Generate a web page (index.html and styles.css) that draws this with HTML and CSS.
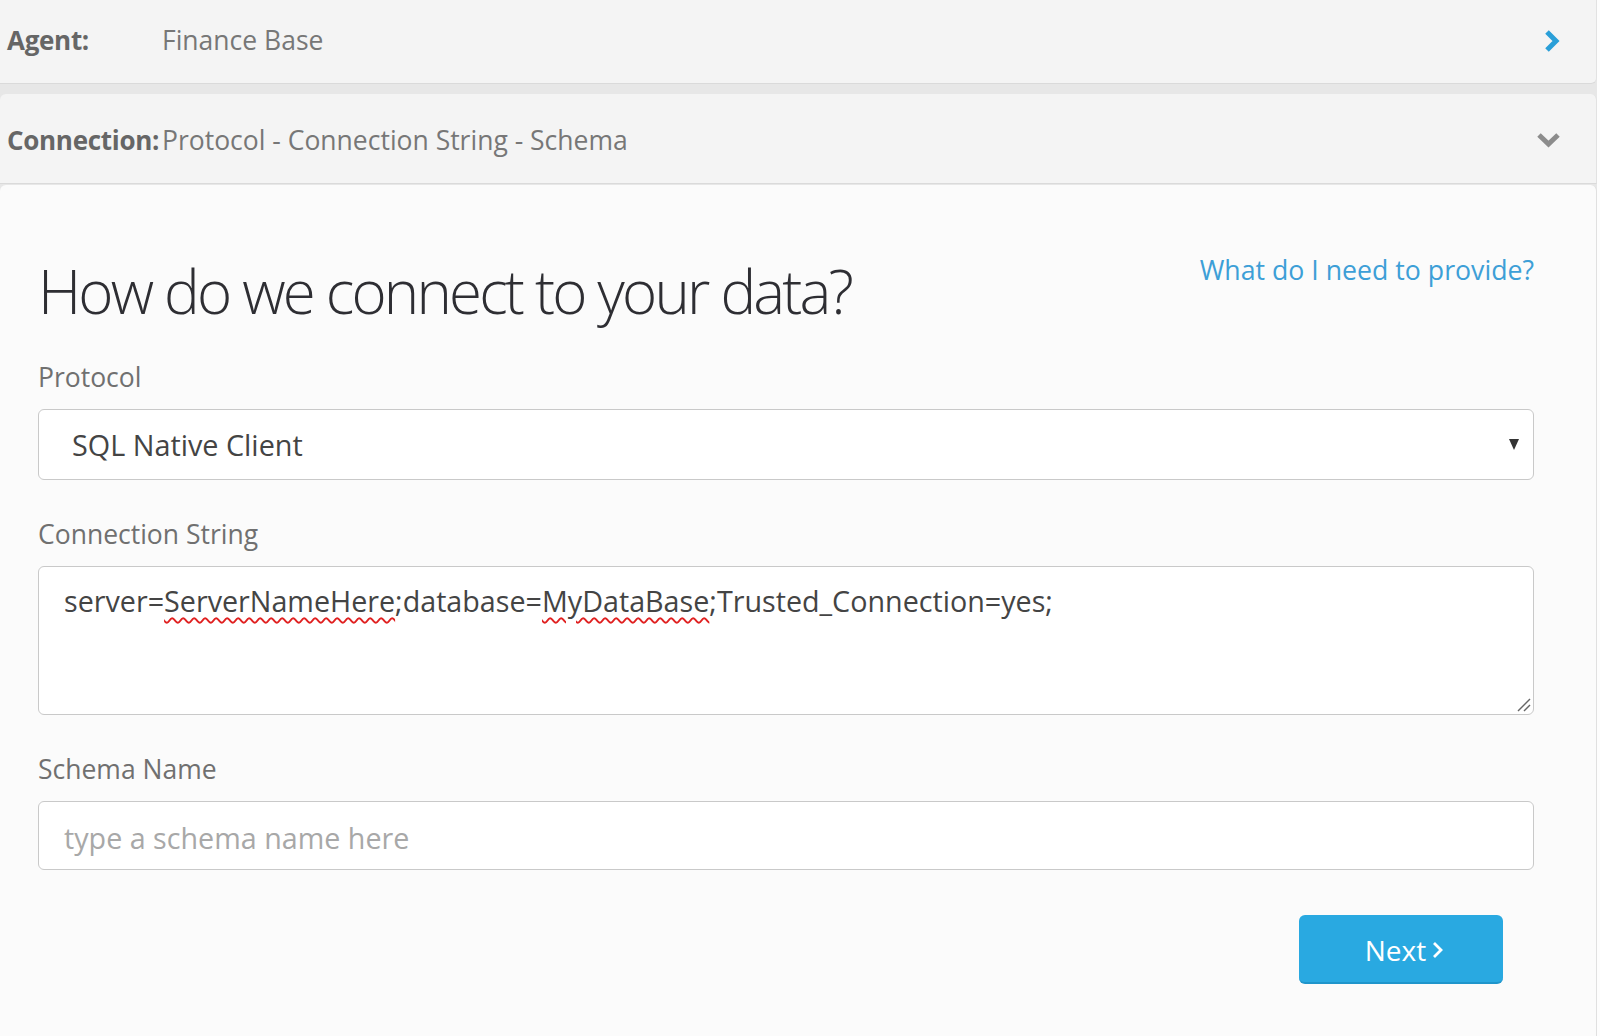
FILE: index.html
```html
<!DOCTYPE html>
<html lang="en">
<head>
  <meta charset="UTF-8" />
  <meta name="viewport" content="width=device-width,initial-scale=1.0">
  <title>Connect your data</title>
  <link rel="stylesheet" href="styles.css">
</head>
<body>
  <div class="wizard">
    <div class="step-head step-agent">
      <span class="step-label">Agent:</span>
      <span class="step-value">Finance Base</span>
      <svg class="step-icon" width="18" height="24" viewBox="0 0 18 24">
        <polyline points="4,3 13,12 4,21" fill="none" stroke="#2a9fd8" stroke-width="5"/>
      </svg>
    </div>

    <div class="step-head step-connection">
      <span class="step-label">Connection:</span>
      <span class="step-value">Protocol - Connection String - Schema</span>
      <svg class="step-icon" width="25" height="18" viewBox="0 0 25 18">
        <polyline points="3,4 12.5,13 22,4" fill="none" stroke="#8c8c8c" stroke-width="5"/>
      </svg>
    </div>

    <div class="step-body">
      <div class="title-row">
        <h1>How do we connect to your data?</h1>
        <a class="help-link" href="#">What do I need to provide?</a>
      </div>

      <div class="form-group">
        <label>Protocol</label>
        <div class="select-box">
          <select>
            <option>SQL Native Client</option>
          </select>
        </div>
      </div>

      <div class="form-group">
        <label>Connection String</label>
        <div class="textarea-box">
          server=<span class="misspelled">ServerNameHere</span>;database=<span class="misspelled">MyDataBase</span>;Trusted_Connection=yes;
          <svg class="grip" width="16" height="16" viewBox="0 0 16 16">
            <line x1="15" y1="3" x2="3" y2="15" stroke="#666" stroke-width="1.4"/>
            <line x1="15" y1="9" x2="9" y2="15" stroke="#666" stroke-width="1.4"/>
          </svg>
        </div>
      </div>

      <div class="form-group">
        <label>Schema Name</label>
        <input class="text-input" type="text" placeholder="type a schema name here">
      </div>

      <div class="actions">
        <button class="btn-next">Next
          <svg width="12" height="20" viewBox="0 0 12 20">
            <polyline points="3,3 10,10 3,17" fill="none" stroke="#fff" stroke-width="2.8"/>
          </svg>
        </button>
      </div>
    </div>
  </div>
</body>
</html>
```

FILE: styles.css
```css
html, body {
  margin: 0;
  padding: 0;
  height: 100vh;
  overflow: hidden;
  background-color: #fdfdfd;
  font-family: "Open Sans", "Noto Sans", sans-serif;
}

.wizard {
  width: 1597px;
  height: 100%;
  background-color: #e7e7e7;
  display: flex;
  flex-direction: column;
}

.step-head {
  display: flex;
  align-items: center;
  background-color: #f4f4f4;
  border-right: 1px solid #e2e2e2;
  border-bottom: 1px solid #dadada;
  border-radius: 0 0 6px 0;
  padding: 0 35px 0 7px;
  font-size: 26.5px;
  box-sizing: border-box;
}

.step-agent {
  height: 84px;
  padding-bottom: 4px;
}

.step-connection {
  height: 90px;
  margin-top: 10px;
  padding-top: 2px;
  border-radius: 6px 6px 0 0;
}

.step-label {
  min-width: 155px;
  font-size: 26px;
  font-weight: bold;
  letter-spacing: -0.3px;
  color: #666;
}

.step-value {
  color: #777;
}

.step-icon {
  margin-left: auto;
}

.step-agent .step-icon {
  margin-top: 2px;
}

.step-body {
  flex: 1;
  margin-top: 1px;
  background-color: #fbfbfb;
  border-right: 1px solid #e0e0e0;
  border-radius: 6px 6px 0 0;
  padding: 66px 62px 0 38px;
}

.title-row {
  display: flex;
  justify-content: space-between;
  align-items: flex-start;
  margin-bottom: 28px;
}

h1 {
  margin: 0;
  font-size: 60px;
  line-height: 80px;
  font-weight: 300;
  letter-spacing: -2.8px;
  color: #2e2e33;
}

.help-link {
  margin-top: 1px;
  font-size: 26.7px;
  line-height: 36px;
  color: #3d9fd7;
  text-decoration: none;
}

.form-group {
  margin-bottom: 36px;
}

.form-group label {
  display: block;
  font-size: 26.5px;
  line-height: 36px;
  color: #707070;
  margin-bottom: 14px;
}

.select-box {
  position: relative;
}

.select-box select {
  display: block;
  width: 100%;
  height: 71px;
  appearance: none;
  -webkit-appearance: none;
  background-color: #fff;
  border: 1.5px solid #c9c9c9;
  border-radius: 6px;
  padding: 0 33px;
  font-family: "Open Sans", "Noto Sans", sans-serif;
  font-size: 28.8px;
  color: #444;
}

.select-box::after {
  content: "";
  position: absolute;
  right: 15px;
  top: 30px;
  border-left: 5px solid transparent;
  border-right: 5px solid transparent;
  border-top: 11px solid #333;
}

.textarea-box {
  position: relative;
  height: 149px;
  box-sizing: border-box;
  background-color: #fff;
  border: 1.5px solid #c9c9c9;
  border-radius: 6px;
  padding: 15px 25px;
  font-size: 28.7px;
  line-height: 38px;
  color: #444;
}

.misspelled {
  text-decoration: underline wavy #e02020;
  text-decoration-thickness: 1.5px;
  text-underline-offset: 5px;
}

.grip {
  position: absolute;
  right: 2px;
  bottom: 2px;
}

.text-input {
  display: block;
  width: 100%;
  height: 69px;
  box-sizing: border-box;
  background-color: #fff;
  border: 1.5px solid #c9c9c9;
  border-radius: 6px;
  padding: 4px 25px 0;
  font-family: "Open Sans", "Noto Sans", sans-serif;
  font-size: 28.7px;
  color: #444;
}

.text-input::placeholder {
  color: #a8a8a8;
}

.actions {
  display: flex;
  justify-content: flex-end;
  padding-right: 31px;
  margin-top: 45px;
}

.btn-next {
  display: flex;
  align-items: center;
  justify-content: center;
  gap: 5px;
  width: 204px;
  height: 69px;
  background-color: #29a9e1;
  border: none;
  border-bottom: 2px solid #1f95cb;
  border-radius: 6px;
  color: #fff;
  font-family: "Open Sans", "Noto Sans", sans-serif;
  font-size: 28px;
  padding: 2px 0 0 6px;
}
```
